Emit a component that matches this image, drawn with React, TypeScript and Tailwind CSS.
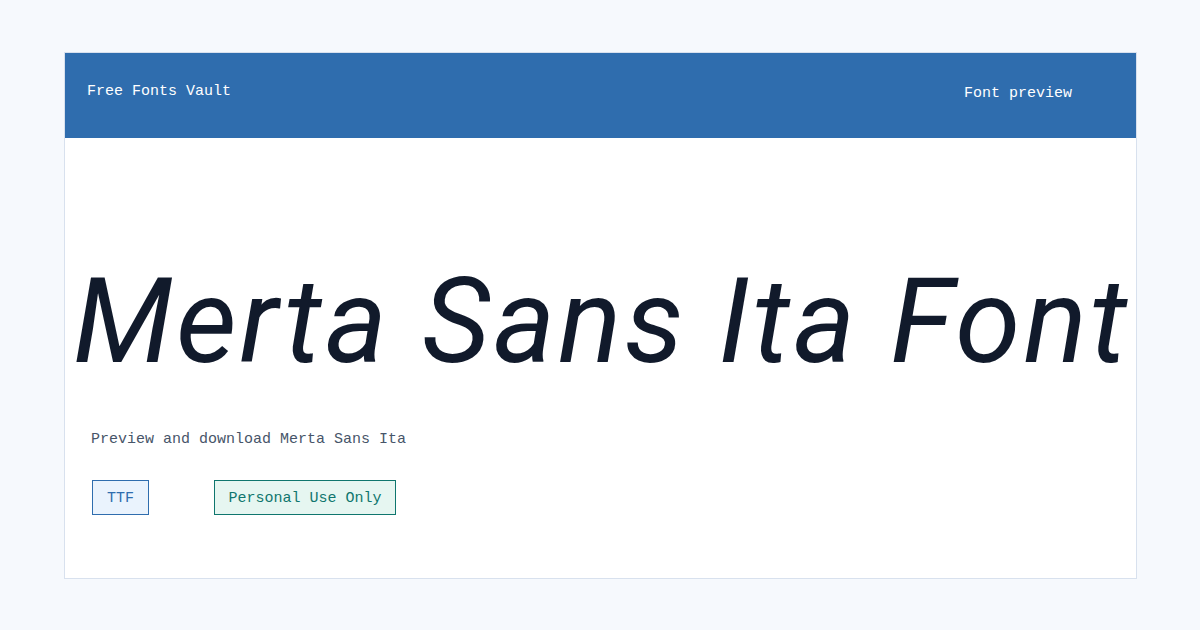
export default function App() {
  return (
    <div className="w-[1200px] h-[630px] bg-[#f6f9fd] pt-[52px] pl-[64px]">
      <div className="w-[1073px] h-[527px] bg-white border border-[#d8e1ee] flex flex-col overflow-hidden">
        <header className="h-[86px] bg-[#2f6dae] flex items-center justify-between pl-[23px] pr-[65px] text-white text-[15px] font-['Liberation_Mono',monospace] shrink-0 -mx-px -mt-px">
          <span className="-mt-[6px]">Free Fonts Vault</span>
          <span className="-mt-[2px]">Font preview</span>
        </header>
        <div className="flex flex-col">
          <h1 className="mt-[125px] pl-[8px] whitespace-nowrap text-[118px] leading-none italic tracking-[3px] text-[#111a2b] font-['Roboto',sans-serif] font-normal">
            Merta Sans Ita Font
          </h1>
          <p className="mt-[49px] pl-[26px] text-[15px] text-[#475569] font-['Liberation_Mono',monospace] leading-[20px]">
            Preview and download Merta Sans Ita
          </p>
          <div className="mt-[30px] pl-[27px] flex gap-[65px] font-['Liberation_Mono',monospace] text-[15px]">
            <span className="h-[35px] w-[57px] pt-[3px] flex items-center justify-center border border-[#2f6dae] bg-[#eaf3fd] text-[#2f6dae]">TTF</span>
            <span className="h-[35px] w-[182px] pt-[3px] flex items-center justify-center border border-[#0f766e] bg-[#e6f6f1] text-[#0f766e]">Personal Use Only</span>
          </div>
        </div>
      </div>
    </div>
  );
}
